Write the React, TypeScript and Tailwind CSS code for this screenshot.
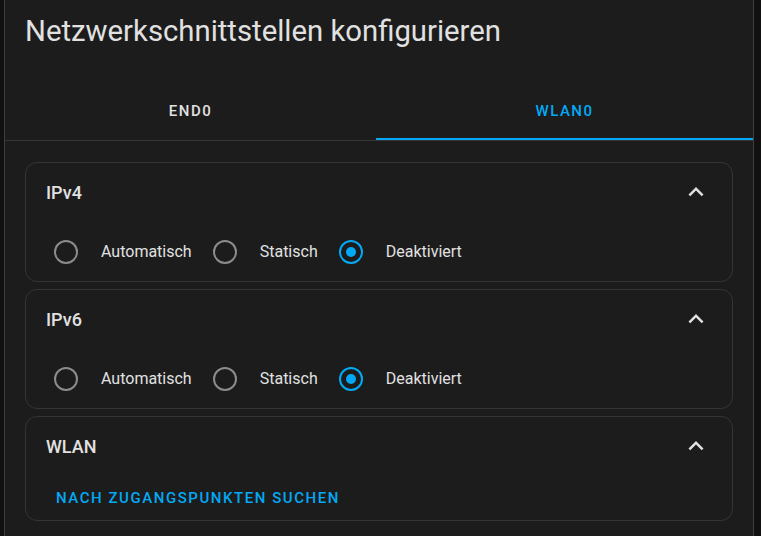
import { useState } from "react";

type Mode = "auto" | "static" | "off";

const ChevronUp = () => (
  <svg width="24" height="24" viewBox="0 0 24 24" className="text-[#e1e1e1]">
    <path d="M12 8l-6 6 1.41 1.41L12 10.83l4.59 4.58L18 14z" fill="currentColor" transform="translate(12 12) scale(1.25) translate(-12 -12)" />
  </svg>
);

const Radio = ({ checked, label, onClick }: { checked: boolean; label: string; onClick: () => void }) => (
  <button type="button" onClick={onClick} className="flex items-center">
    <span className="flex h-12 w-12 items-center justify-center">
      <span
        className={
          checked
            ? "flex h-6 w-6 items-center justify-center rounded-full border-[2.5px] border-[#03a9f4]"
            : "flex h-6 w-6 items-center justify-center rounded-full border-[2.5px] border-[#8c8c8c]"
        }
      >
        {checked && <span className="h-[10px] w-[10px] rounded-full bg-[#03a9f4]" />}
      </span>
    </span>
    <span className="ml-[11px] mr-[9px] text-[16px] text-[#e1e1e1]">{label}</span>
  </button>
);

const Panel = ({ title, children }: { title: string; children: React.ReactNode }) => (
  <div className="rounded-xl border border-[#353535]">
    <div className="flex h-[58px] items-center justify-between pl-5 pr-6">
      <span className="text-[18px] font-medium text-[#e1e1e1]">{title}</span>
      <ChevronUp />
    </div>
    {children}
  </div>
);

const ModeGroup = () => {
  const [mode, setMode] = useState<Mode>("off");
  return (
    <div className="mt-[7px] mb-[5px] flex items-center pl-4">
      <Radio checked={mode === "auto"} label="Automatisch" onClick={() => setMode("auto")} />
      <Radio checked={mode === "static"} label="Statisch" onClick={() => setMode("static")} />
      <Radio checked={mode === "off"} label="Deaktiviert" onClick={() => setMode("off")} />
    </div>
  );
};

export default function App() {
  const [tab, setTab] = useState(1);
  const tabs = ["END0", "WLAN0"];

  return (
    <div className="h-[536px] w-[761px] overflow-hidden bg-[#111111]" style={{ fontFamily: "Roboto, 'Liberation Sans', sans-serif" }}>
      <div className="ml-[4px] h-full w-[750px] border-x border-[#3f3f3f] bg-[#1c1c1c]">
        {/* Title */}
        <div className="flex h-[88px] items-start px-5 pt-[11px]">
          <h2 className="text-[29.3px] leading-[40px] text-[#e1e1e1]">Netzwerkschnittstellen konfigurieren</h2>
        </div>

        {/* Tabs */}
        <div className="flex border-b border-[#363636]">
          {tabs.map((t, i) => (
            <button
              key={t}
              type="button"
              onClick={() => setTab(i)}
              className={
                (i === 0 ? "w-[371px] " : "flex-1 ") +
                (tab === i
                  ? "flex h-[52px] items-center justify-center border-b-2 border-[#03a9f4] pb-1 text-[15px] font-medium tracking-[1.5px] text-[#03a9f4]"
                  : "flex h-[52px] items-center justify-center border-b-2 border-transparent pb-1 text-[15px] font-medium tracking-[1.5px] text-[#e1e1e1]")
              }
            >
              {t}
            </button>
          ))}
        </div>

        {/* Content */}
        <div className="flex flex-col gap-[7px] px-5 pt-[21px]">
          <Panel title="IPv4">
            <ModeGroup />
          </Panel>
          <Panel title="IPv6">
            <ModeGroup />
          </Panel>
          <Panel title="WLAN">
            <div className="mt-[5px] mb-[4px] pl-[22px]">
              <button type="button" className="h-9 rounded px-2 text-[15px] font-medium tracking-[1.55px] text-[#03a9f4]">
                NACH ZUGANGSPUNKTEN SUCHEN
              </button>
            </div>
          </Panel>
        </div>
      </div>
    </div>
  );
}
